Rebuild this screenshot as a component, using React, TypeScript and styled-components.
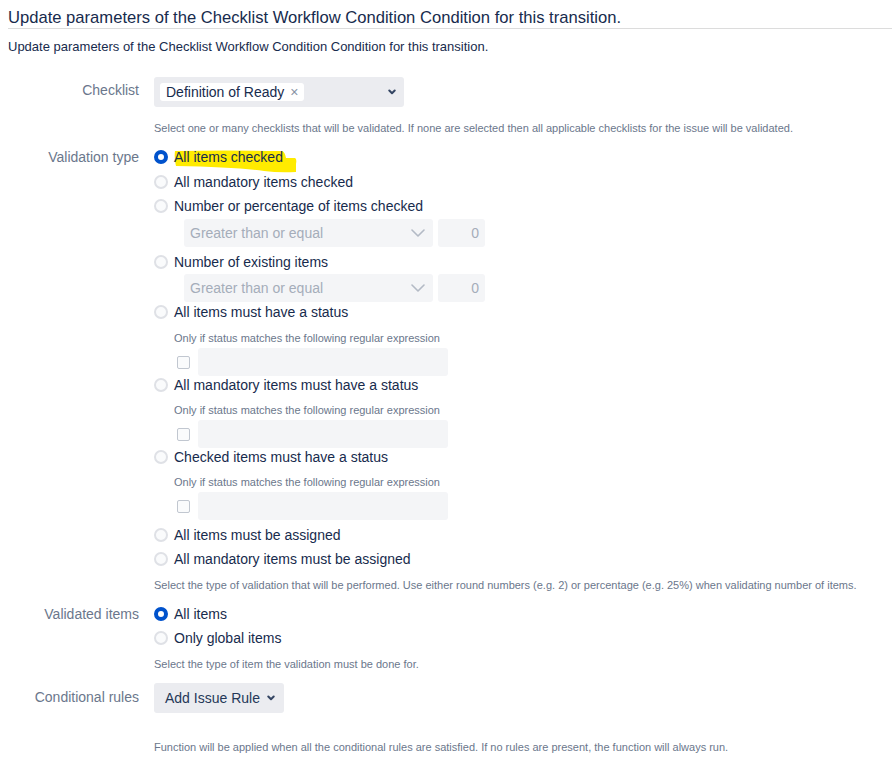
import React from "react";
import styled, { createGlobalStyle } from "styled-components";

const Global = createGlobalStyle`
  html, body { margin: 0; padding: 0; background: #ffffff; }
  body { font-family: "Liberation Sans", Arial, sans-serif; color: #172b4d; }
  * { box-sizing: border-box; }
`;

const Page = styled.div`
  padding: 8px 0 0 8px;
  width: 892px;
`;

const Title = styled.h2`
  margin: 0;
  font-size: 16.6px;
  font-weight: 400;
  line-height: 20px;
  color: #172b4d;
  border-bottom: 1px solid #dcdcdc;
`;

const Subtitle = styled.p`
  margin: 10px 0 0;
  font-size: 13px;
  line-height: 16px;
  color: #172b4d;
`;

const Form = styled.div`
  margin-top: 22px;
  display: flex;
  flex-direction: column;
`;

const FieldRow = styled.div<{ $mt?: number }>`
  display: grid;
  grid-template-columns: 131px 1fr;
  column-gap: 15px;
  margin-top: ${(p) => p.$mt ?? 0}px;
`;

const Label = styled.div<{ $pt?: number }>`
  text-align: right;
  color: #6b778c;
  font-size: 14px;
  line-height: 18px;
  padding-top: ${(p) => p.$pt ?? 0}px;
`;

const Field = styled.div`
  display: flex;
  flex-direction: column;
  align-items: flex-start;
`;

const Help = styled.div<{ $mt?: number; $indent?: number }>`
  margin-top: ${(p) => p.$mt ?? 0}px;
  margin-left: ${(p) => p.$indent ?? 0}px;
  font-size: 11px;
  line-height: 14px;
  color: #6b778c;
  white-space: nowrap;
`;

const MultiSelect = styled.div`
  width: 250px;
  height: 30px;
  background: #ebecf0;
  border-radius: 3px;
  display: flex;
  align-items: center;
  padding: 0 8px 0 6px;
  justify-content: space-between;
`;

const Tag = styled.span`
  display: inline-flex;
  align-items: center;
  gap: 6px;
  height: 18px;
  background: #ffffff;
  border-radius: 3px;
  padding: 0 6px 0 6px;
  font-size: 14px;
  color: #172b4d;
`;

const TagX = styled.span`
  color: #8993a4;
  font-size: 14px;
  line-height: 1;
`;

const RadioRow = styled.label<{ $mt?: number }>`
  display: flex;
  align-items: center;
  gap: 6px;
  height: 18px;
  margin-top: ${(p) => p.$mt ?? 0}px;
  font-size: 14px;
  color: #172b4d;
  white-space: nowrap;
`;

const RadioDot = styled.span<{ $on?: boolean }>`
  width: 14px;
  height: 14px;
  border-radius: 50%;
  flex: none;
  background: ${(p) => (p.$on ? "#ffffff" : "#fafbfc")};
  border: ${(p) => (p.$on ? "4.5px solid #0052cc" : "2px solid #dfe1e6")};
`;

const RadioText = styled.span`
  position: relative;
`;

const RadioTextInner = styled.span`
  position: relative;
  z-index: 1;
`;

const Highlight = styled.svg`
  position: absolute;
  left: 0;
  top: -1px;
  width: 124px;
  height: 28px;
  z-index: 0;
  overflow: visible;
`;

const Compare = styled.div<{ $mt?: number }>`
  display: flex;
  gap: 5px;
  margin-left: 30px;
  margin-top: ${(p) => p.$mt ?? 0}px;
`;

const DisabledSelect = styled.div`
  width: 249px;
  height: 28px;
  background: #f4f5f7;
  border-radius: 3px;
  display: flex;
  align-items: center;
  justify-content: space-between;
  padding: 0 8px 0 6px;
  font-size: 14px;
  color: #a5adba;
`;

const NumberBox = styled.div`
  width: 47px;
  height: 28px;
  background: #f4f5f7;
  border-radius: 3px;
  display: flex;
  align-items: center;
  justify-content: flex-end;
  padding-right: 6px;
  font-size: 14px;
  color: #a5adba;
`;

const RegexBlock = styled.div<{ $mt?: number }>`
  display: flex;
  flex-direction: column;
  margin-left: 20px;
  margin-top: ${(p) => p.$mt ?? 0}px;
`;

const RegexLine = styled.div`
  display: flex;
  align-items: center;
  gap: 8px;
  margin-top: 3px;
  padding-left: 3px;
`;

const CheckBox = styled.span`
  width: 13px;
  height: 13px;
  border: 1.5px solid #c1c7d0;
  border-radius: 2px;
  background: #fafbfc;
  flex: none;
`;

const TextInput = styled.div`
  width: 250px;
  height: 28px;
  background: #f4f5f7;
  border-radius: 3px;
`;

const DropButton = styled.button`
  height: 30px;
  width: 130px;
  border: none;
  border-radius: 3px;
  background: #ebecf0;
  display: flex;
  align-items: center;
  gap: 7px;
  padding: 0 0 0 11px;
  font-family: "Liberation Sans", Arial, sans-serif;
  font-size: 14px;
  color: #253858;
`;

const SmallChevron = () => (
  <svg width="8" height="6" viewBox="0 0 8 6">
    <path d="M1.3 1.5 L4 4.2 L6.7 1.5" fill="none" stroke="#344563" strokeWidth="2" strokeLinecap="round" strokeLinejoin="round" />
  </svg>
);

const ThinChevron = () => (
  <svg width="14" height="8" viewBox="0 0 14 8">
    <path d="M1 1 L7 7 L13 1" fill="none" stroke="#b3bac5" strokeWidth="1.6" strokeLinecap="round" strokeLinejoin="round" />
  </svg>
);

type Opt = { text: string; on?: boolean; mt?: number; hl?: boolean };

const Radio: React.FC<Opt> = ({ text, on, mt, hl }) => (
  <RadioRow $mt={mt}>
    <RadioDot $on={on} />
    <RadioText>
      {hl && (
        <Highlight viewBox="0 0 124 28">
          <path
            d="M1 3 Q50 2 108 3 Q111 4 112 10 L121 10 Q123 11 122 16 L122 24 Q105 25 90 23 Q60 19 2 18 Q0 10 1 3 Z"
            fill="#ffeb00"
          />
        </Highlight>
      )}
      <RadioTextInner>{text}</RadioTextInner>
    </RadioText>
  </RadioRow>
);

const CompareRow: React.FC<{ mt?: number }> = ({ mt }) => (
  <Compare $mt={mt}>
    <DisabledSelect>
      <span>Greater than or equal</span>
      <ThinChevron />
    </DisabledSelect>
    <NumberBox>0</NumberBox>
  </Compare>
);

const Regex: React.FC<{ mt?: number }> = ({ mt }) => (
  <RegexBlock $mt={mt}>
    <Help>Only if status matches the following regular expression</Help>
    <RegexLine>
      <CheckBox />
      <TextInput />
    </RegexLine>
  </RegexBlock>
);

export default function App() {
  return (
    <Page>
      <Global />
      <Title>Update parameters of the Checklist Workflow Condition Condition for this transition.</Title>
      <Subtitle>Update parameters of the Checklist Workflow Condition Condition for this transition.</Subtitle>
      <Form>
        <FieldRow>
          <Label $pt={4}>Checklist</Label>
          <Field>
            <MultiSelect>
              <Tag>
                Definition of Ready <TagX>×</TagX>
              </Tag>
              <SmallChevron />
            </MultiSelect>
            <Help $mt={14}>
              Select one or many checklists that will be validated. If none are selected then all applicable checklists for the issue will be validated.
            </Help>
          </Field>
        </FieldRow>

        <FieldRow $mt={13}>
          <Label>Validation type</Label>
          <Field>
            <Radio text="All items checked" on hl />
            <Radio text="All mandatory items checked" mt={7} />
            <Radio text="Number or percentage of items checked" mt={6} />
            <CompareRow mt={4} />
            <Radio text="Number of existing items" mt={6} />
            <CompareRow mt={3} />
            <Radio text="All items must have a status" mt={1} />
            <Regex mt={10} />
            <Radio text="All mandatory items must have a status" mt={0} />
            <Regex mt={9} />
            <Radio text="Checked items must have a status" mt={0} />
            <Regex mt={9} />
            <Radio text="All items must be assigned" mt={6} />
            <Radio text="All mandatory items must be assigned" mt={6} />
            <Help $mt={10}>
              Select the type of validation that will be performed. Use either round numbers (e.g. 2) or percentage (e.g. 25%) when validating number of items.
            </Help>
          </Field>
        </FieldRow>

        <FieldRow $mt={13}>
          <Label>Validated items</Label>
          <Field>
            <Radio text="All items" on />
            <Radio text="Only global items" mt={6} />
            <Help $mt={10}>Select the type of item the validation must be done for.</Help>
          </Field>
        </FieldRow>

        <FieldRow $mt={12}>
          <Label $pt={5}>Conditional rules</Label>
          <Field>
            <DropButton>
              Add Issue Rule <SmallChevron />
            </DropButton>
            <Help $mt={27}>
              Function will be applied when all the conditional rules are satisfied. If no rules are present, the function will always run.
            </Help>
          </Field>
        </FieldRow>
      </Form>
    </Page>
  );
}
